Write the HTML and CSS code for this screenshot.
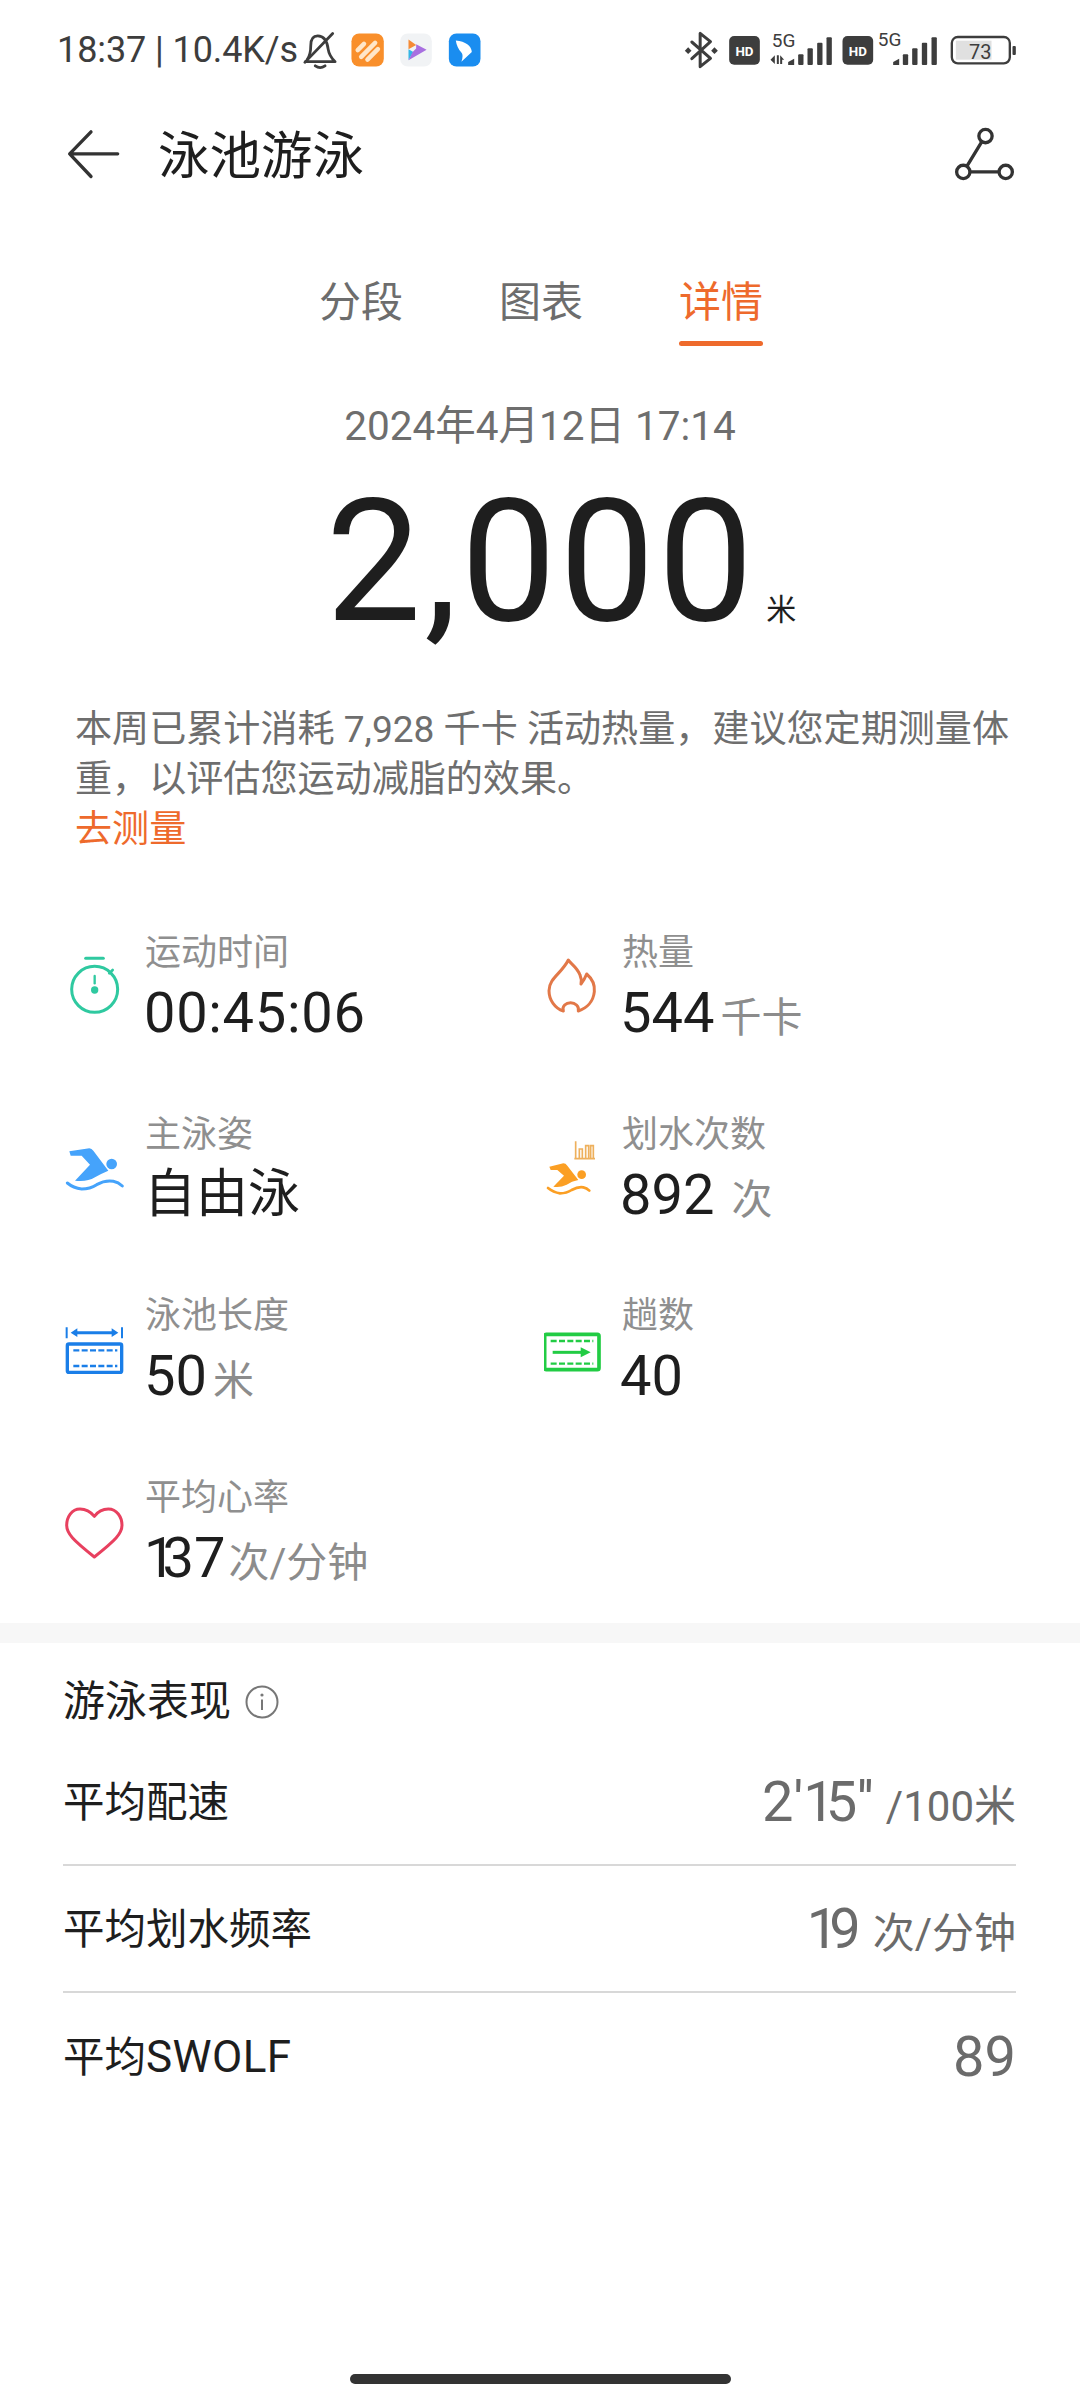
FILE: index.html
```html
<!DOCTYPE html>
<html lang="zh-CN">
<head>
<meta charset="utf-8">
<title>泳池游泳</title>
<link rel="stylesheet" href="styles.css">
</head>
<body>
<div class="page">
  <div class="status">
    <div class="status-left">
      <span class="clock">18:37 | 10.4K/s</span>
      <svg class="status-apps" viewBox="880 95 520 115">
        <g fill="none" stroke="#3d3d3d" stroke-width="8" stroke-linecap="round" stroke-linejoin="round">
          <path d="M890 186H975Q958 170 955 150Q950 112 925 112Q905 112 905 140Q905 165 895 180"/>
          <path d="M888 188L968 105"/>
          <path d="M918 198Q932 208 946 198"/>
        </g>
        <rect x="1022" y="105" width="93" height="95" rx="22" fill="#f98f2b"/>
        <path d="M1040 153L1058 135M1050 172L1090 132M1068 180L1098 150" stroke="#ffe6c8" stroke-width="13" stroke-linecap="round"/>
        <rect x="1162" y="105" width="91" height="95" rx="22" fill="#f1f3f5"/>
        <path d="M1186 122L1208 138L1186 150Z" fill="#f58a35"/>
        <path d="M1186 150L1200 158L1186 182Z" fill="#33b6e6"/>
        <path d="M1186 182L1238 152L1208 136L1208 148L1198 158Z" fill="#a86fe0"/>
        <rect x="1302" y="105" width="91" height="95" rx="22" fill="#1a8df0"/>
        <path d="M1322 125Q1365 130 1368 158L1338 186Q1345 168 1338 160Q1325 145 1322 125Z" fill="#fff"/>
      </svg>
    </div>
    <svg class="status-right" viewBox="130 90 1010 120">
      <g fill="none" stroke="#3d3d3d" stroke-width="9" stroke-linejoin="round" stroke-linecap="round">
        <path d="M156 176L212 125L181 100V200L212 175L156 126"/>
      </g>
      <g fill="#3d3d3d">
        <path d="M145 142L155 152L145 162L135 152Z"/>
        <path d="M224 142L234 152L224 162L214 152Z"/>
        <rect x="268" y="108" width="92" height="86" rx="15"/>
        <rect x="608" y="108" width="92" height="86" rx="15"/>
        <path d="M392 179L405 166V192ZM411 166H417V192H411ZM421 166L433 179H427V192H421Z"/>
        <path d="M445 195V186L463 176V195Z"/>
        <rect x="475" y="163" width="16" height="32" rx="3"/>
        <rect x="503" y="145" width="16" height="50" rx="3"/>
        <rect x="532" y="128" width="16" height="67" rx="3"/>
        <rect x="560" y="112" width="16" height="83" rx="3"/>
        <path d="M760 195V186L778 176V195Z"/>
        <rect x="789" y="163" width="16" height="32" rx="3"/>
        <rect x="817" y="145" width="16" height="50" rx="3"/>
        <rect x="846" y="128" width="16" height="67" rx="3"/>
        <rect x="875" y="112" width="16" height="83" rx="3"/>
        <rect x="1118" y="138" width="10" height="27" rx="3"/>
      </g>
      <text class="svg-hd" x="314" y="167">HD</text>
      <text class="svg-hd" x="654" y="167">HD</text>
      <text class="svg-5g" x="396" y="142">5G</text>
      <text class="svg-5g" x="714" y="138">5G</text>
      <rect x="948" y="122" width="107" height="57" fill="#e0e0e0"/>
      <rect x="936" y="111" width="174" height="79" rx="18" fill="none" stroke="#3d3d3d" stroke-width="7"/>
      <text class="svg-batt" x="1021" y="177">73</text>
    </svg>
  </div>

  <header class="header">
    <svg class="back" viewBox="195 385 165 155">
      <path d="M350 462H206M270 396L206 462L270 530" fill="none" stroke="#333" stroke-width="10" stroke-linecap="round" stroke-linejoin="round"/>
    </svg>
    <h1 class="title">泳池游泳</h1>
    <svg class="share" viewBox="940 380 190 165">
      <g fill="none" stroke="#333" stroke-width="10">
        <path d="M1024 424L980 496M990 515H1074"/>
        <circle cx="1035" cy="407" r="20"/>
        <circle cx="968" cy="515" r="20"/>
        <circle cx="1096" cy="515" r="20"/>
      </g>
    </svg>
  </header>

  <nav class="tabs">
    <div class="tab">分段</div>
    <div class="tab">图表</div>
    <div class="tab tab-active">详情<div class="tab-line"></div></div>
  </nav>

  <div class="date">2024年4月12日 17:14</div>
  <div class="total"><span class="total-num">2,000</span><span class="total-unit">米</span></div>

  <p class="notice">本周已累计消耗 7,928 千卡 活动热量，建议您定期测量体重，以评估您运动减脂的效果。<br><span class="link">去测量</span></p>

  <section class="metrics">
    <div class="metric">
      <svg class="metric-icon" viewBox="72 96 198 198">
        <g fill="none" stroke="#2fc9a0" stroke-width="9" stroke-linecap="round">
          <path d="M137 115H190"/>
          <circle cx="164" cy="208" r="69"/>
          <path d="M164 168V190" stroke-width="7"/>
          <path d="M208 160L218 150" stroke-width="8"/>
        </g>
        <circle cx="164" cy="210" r="11" fill="#2fc9a0"/>
      </svg>
      <div class="metric-text"><div class="label">运动时间</div><div class="value value-time">00:45:06</div></div>
    </div>
    <div class="metric">
      <svg class="metric-icon" viewBox="72 96 198 198">
        <path d="M145 120C150 130 170 140 180 165Q186 178 183 192Q193 180 200 162C215 175 225 195 223 215C220 245 200 265 175 273C178 258 165 248 152 248C138 248 125 258 130 273C105 265 87 240 87 212C87 175 125 160 145 120Z" fill="none" stroke="#e27848" stroke-width="9" stroke-linejoin="round"/>
      </svg>
      <div class="metric-text"><div class="label">热量</div><div class="value">544<span class="unit">千卡</span></div></div>
    </div>
    <div class="metric">
      <svg class="metric-icon" viewBox="72 640 198 198">
        <path d="M88 692L148 683Q155 684 160 690L205 750Q185 758 165 770Q140 785 105 780L150 732L125 705Q100 705 92 705Z" fill="#45a3fb"/>
        <circle cx="215" cy="730" r="16" fill="#45a3fb"/>
        <path d="M82 787Q100 802 125 805Q150 805 170 792Q195 778 220 782Q235 785 247 796" fill="none" stroke="#45a3fb" stroke-width="9" stroke-linecap="round"/>
      </svg>
      <div class="metric-text"><div class="label">主泳姿</div><div class="value value-cjk">自由泳</div></div>
    </div>
    <div class="metric">
      <svg class="metric-icon" viewBox="72 640 198 198">
        <path d="M88 738L130 728Q137 728 142 735L175 778Q155 782 140 792Q120 802 100 798L132 765L112 748L92 748Z" fill="#fb9f24"/>
        <circle cx="185" cy="762" r="13" fill="#fb9f24"/>
        <path d="M84 802Q100 815 120 818Q140 818 155 808Q175 797 190 800Q200 802 208 810" fill="none" stroke="#fb9f24" stroke-width="8" stroke-linecap="round"/>
        <path d="M163 714H225M167 662V714M178 685H187V714H178ZM197 675H206V714H197ZM212 675H220V714H212Z" fill="none" stroke="#eeb05c" stroke-width="5"/>
      </svg>
      <div class="metric-text"><div class="label">划水次数</div><div class="value">892<span class="unit unit-wide">次</span></div></div>
    </div>
    <div class="metric">
      <svg class="metric-icon" viewBox="72 135 198 198">
        <g fill="none" stroke="#1a7ee8">
          <path d="M80 172V205M246 172V205" stroke-width="6"/>
          <path d="M105 188H225" stroke-width="9"/>
          <rect x="82" y="222" width="163" height="85" rx="5" stroke-width="10"/>
          <path d="M100 241H232M100 288H232" stroke-width="7" stroke-dasharray="18 7"/>
        </g>
        <path d="M92 188L112 175V201ZM235 188L215 175V201Z" fill="#1a7ee8"/>
      </svg>
      <div class="metric-text"><div class="label">泳池长度</div><div class="value">50<span class="unit">米</span></div></div>
    </div>
    <div class="metric">
      <svg class="metric-icon" viewBox="72 135 198 198">
        <g fill="none" stroke="#22cc44">
          <rect x="74" y="193" width="163" height="106" rx="5" stroke-width="11"/>
          <path d="M92 213H220M92 281H220" stroke-width="7" stroke-dasharray="18 7"/>
          <path d="M98 247H188" stroke-width="9"/>
        </g>
        <path d="M212 247L182 232V262Z" fill="#22cc44"/>
      </svg>
      <div class="metric-text"><div class="label">趟数</div><div class="value">40</div></div>
    </div>
    <div class="metric">
      <svg class="metric-icon" viewBox="72 680 198 198">
        <path d="M163 738C150 722 135 716 120 716C95 716 80 740 80 765C80 790 100 810 163 860C226 810 246 790 246 765C246 740 230 716 205 716C190 716 175 722 163 738Z" fill="none" stroke="#e8405f" stroke-width="9" stroke-linejoin="round"/>
      </svg>
      <div class="metric-text"><div class="label">平均心率</div><div class="value"><span class="one">1</span>37<span class="unit unit-tight">次/分钟</span></div></div>
    </div>
  </section>

  <div class="band"></div>

  <section class="perf">
    <div class="perf-title">游泳表现
      <svg class="info" viewBox="0 0 34 34">
        <circle cx="17" cy="17" r="15.5" fill="none" stroke="#777" stroke-width="2"/>
        <circle cx="17" cy="10" r="1.6" fill="#777"/>
        <path d="M17 14.5V25" stroke="#777" stroke-width="2"/>
      </svg>
    </div>
    <div class="row"><span class="row-label">平均配速</span><span class="row-val"><span class="row-num">2'<span class="one-row">1</span>5''</span><span class="row-unit">/100米</span></span></div>
    <div class="row"><span class="row-label">平均划水频率</span><span class="row-val"><span class="row-num"><span class="one-row">1</span>9</span><span class="row-unit">次/分钟</span></span></div>
    <div class="row row-last"><span class="row-label">平均<span class="latin">SWOLF</span></span><span class="row-val"><span class="row-num">89</span></span></div>
  </section>

  <div class="home"></div>
</div>
</body>
</html>
```
FILE: styles.css
```css
* { box-sizing: border-box; }
html, body { margin: 0; padding: 0; background: #fff; }
body { font-family: Roboto, "Noto Sans CJK SC", sans-serif; color: #1e1e1e; }
.page { width: 1080px; height: 2400px; display: flex; flex-direction: column; overflow: hidden; }

.status { height: 100px; display: flex; justify-content: space-between; align-items: center; padding: 0 60px 0 57px; }
.status-left { display: flex; align-items: center; }
.clock { font-size: 36px; color: #3d3d3d; letter-spacing: -0.1px; white-space: nowrap; }
.status-apps { width: 181px; height: 40px; margin-left: 4px; }
.status-right { width: 337px; height: 40px; overflow: visible; }
.svg-hd { font: 700 40px Roboto, sans-serif; fill: #fff; text-anchor: middle; }
.svg-5g { font: 400 57px Roboto, sans-serif; fill: #3d3d3d; }
.svg-batt { font: 400 60px Roboto, sans-serif; fill: #3d3d3d; text-anchor: middle; }

.header { height: 104px; margin-top: 2px; display: flex; align-items: center; padding: 0 63px 0 66px; }
.back { width: 55px; height: 52px; }
.title { margin: 0 0 6px 37px; font-size: 51.5px; font-weight: 400; color: #1e1e1e; flex: 1; }
.share { width: 63px; height: 55px; }

.tabs { display: flex; gap: 96px; padding-left: 319px; margin-top: 69px; }
.tab { width: 84px; font-size: 42px; line-height: 56px; color: #6d6d6d; text-align: center; white-space: nowrap; }
.tab-active { color: #ee6a2c; }
.tab-line { height: 5px; margin-top: 10px; background: #ee6a2c; border-radius: 3px; }

.date { margin-top: 52px; font-size: 40.5px; line-height: 56px; color: #6e6e6e; text-align: center; }
.total { margin-top: 28px; height: 160px; display: flex; justify-content: center; align-items: baseline; padding-left: 42px; }
.total-num { font-size: 170px; line-height: 160px; letter-spacing: 3px; color: #1e1e1e; }
.total-unit { font-size: 30px; margin-left: 10px; color: #1e1e1e; }

.notice { margin: 63px 58px 0 75px; font-size: 37.1px; line-height: 50px; color: #6e6e6e; }
.link { color: #ee6a2c; }

.metrics { margin-top: 65px; display: grid; grid-template-columns: 480px 1fr; grid-template-rows: 181.5px 181.5px 181.5px 158.5px; padding-left: 64px; }
.metric { display: flex; align-items: flex-start; gap: 15px; }
.metric:nth-child(even) { gap: 12px; }
.metric-icon { width: 66px; height: 66px; margin-top: 32px; flex: none; }
.metric-text { padding-top: 3px; }
.label { font-size: 36px; line-height: 60px; color: #8f8f8f; white-space: nowrap; }
.value { font-size: 56px; line-height: 60px; margin-left: -1px; color: #1e1e1e; white-space: nowrap; }
.metric:nth-child(even) .value { margin-left: -2px; }
.value-time { letter-spacing: 0.7px; }
.value-cjk { font-size: 52px; }
.unit { font-size: 41px; margin-left: 6px; color: #8c8c8c; }
.unit-wide { margin-left: 17px; }
.unit-tight { margin-left: 3px; }
.one { letter-spacing: -13px; }

.band { height: 20px; background: #f7f7f7; flex: none; }

.perf { padding: 29px 64px 0 63px; }
.perf-title { display: flex; gap: 14px; font-size: 42px; line-height: 60px; height: 67px; align-items: flex-start; color: #1e1e1e; }
.info { width: 34px; height: 34px; margin-top: 13px; }
.row { height: 127px; display: flex; justify-content: space-between; align-items: center; font-size: 41.5px; color: #1e1e1e; border-bottom: 2px solid #d8d8d8; }
.row-last { border-bottom: 0; }
.row-label { margin-bottom: 6px; }
.latin { font-size: 44px; letter-spacing: 0.4px; }
.row-val { color: #6b6b6b; }
.row-num { font-size: 56px; }
.one-row { letter-spacing: -9px; }
.row-unit { font-size: 42px; margin-left: 12px; }

.home { width: 381px; height: 10px; margin: auto auto 16px; background: #333; border-radius: 5px; }
```
